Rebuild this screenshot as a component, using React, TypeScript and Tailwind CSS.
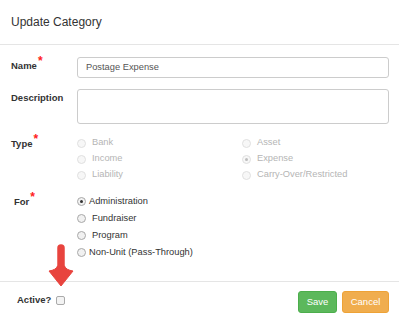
import React from 'react'

const typeLeft = [
  { label: 'Bank', checked: false },
  { label: 'Income', checked: false },
  { label: 'Liability', checked: false },
]

const typeRight = [
  { label: 'Asset', checked: false },
  { label: 'Expense', checked: true },
  { label: 'Carry-Over/Restricted', checked: false },
]

const forOptions = [
  { label: 'Administration', checked: true, gap: 'ml-[3px]' },
  { label: 'Fundraiser', checked: false, gap: 'ml-[6px]' },
  { label: 'Program', checked: false, gap: 'ml-[6px]' },
  { label: 'Non-Unit (Pass-Through)', checked: false, gap: 'ml-[3px]' },
]

function Radio({ checked, disabled }: { checked: boolean; disabled?: boolean }) {
  return (
    <span
      className={`flex items-center justify-center w-[9px] h-[9px] rounded-full border shrink-0 ${
        disabled ? 'border-[#e0e0e0] bg-[#f7f7f7]' : 'border-[#a8a8a8] bg-[#f1f1f1]'
      }`}
    >
      {checked && (
        <span
          className={`w-[3px] h-[3px] rounded-full ${disabled ? 'bg-[#bdbdbd]' : 'bg-[#333]'}`}
        />
      )}
    </span>
  )
}

function Star() {
  return <span className="text-[#ff2020] text-[12px] font-bold relative top-[-4px] ml-[1px]">*</span>
}

export default function App() {
  return (
    <div className="relative w-[399px] h-[324px] bg-white overflow-hidden font-['Liberation_Sans',Arial,sans-serif] text-[#333]">
      {/* header */}
      <div className="h-[45px] border-b border-[#e5e5e5] flex items-center pl-[11px] pb-[1px]">
        <h4 className="text-[12px] text-[#333]">Update Category</h4>
      </div>

      <div className="pt-[12px] pr-[10px]">
        {/* name */}
        <div className="flex">
          <label className="w-[77px] pl-[11px] text-[9.5px] font-bold leading-[16px]">
            Name
            <Star />
          </label>
          <div className="flex-1 h-[21px] border border-[#ccc] rounded-[3px] flex items-center pl-[8px] text-[9.3px] text-[#555]">
            Postage Expense
          </div>
        </div>

        {/* description */}
        <div className="flex mt-[11px]">
          <label className="w-[77px] pl-[11px] pt-[1px] text-[9.5px] font-bold leading-[16px]">Description</label>
          <div className="flex-1 h-[35px] border border-[#ccc] rounded-[3px]" />
        </div>

        {/* type */}
        <div className="flex mt-[11px]">
          <label className="w-[77px] pl-[11px] text-[9.5px] font-bold leading-[16px]">
            Type
            <Star />
          </label>
          <div className="flex text-[9.3px] text-[#b5b5b5]">
            <div className="w-[165px]">
              {typeLeft.map(o => (
                <div key={o.label} className="h-[16px] flex items-center">
                  <Radio checked={o.checked} disabled />
                  <span className="ml-[6px]">{o.label}</span>
                </div>
              ))}
            </div>
            <div>
              {typeRight.map(o => (
                <div key={o.label} className="h-[16px] flex items-center">
                  <Radio checked={o.checked} disabled />
                  <span className="ml-[6px]">{o.label}</span>
                </div>
              ))}
            </div>
          </div>
        </div>

        {/* for */}
        <div className="flex mt-[10px]">
          <label className="w-[77px] pl-[14px] text-[9.5px] font-bold leading-[17px]">
            For
            <Star />
          </label>
          <div className="text-[9.3px] text-[#333]">
            {forOptions.map(o => (
              <div key={o.label} className="h-[17px] flex items-center">
                <Radio checked={o.checked} />
                <span className={o.gap}>{o.label}</span>
              </div>
            ))}
          </div>
        </div>
      </div>

      {/* footer */}
      <div className="absolute left-0 right-0 top-[281px] h-[43px] border-t border-[#e5e5e5] flex items-center justify-between pl-[17px] pr-[10px]">
        <div className="flex items-center -mt-[6px]">
          <span className="text-[9.5px] font-bold">Active?</span>
          <span className="ml-[5px] w-[9px] h-[9px] border border-[#aaa] rounded-[2px] bg-[#f3f3f3]" />
        </div>
        <div className="flex gap-[5px] -mt-[2px]">
          <button className="w-[39px] h-[22px] rounded-[3px] bg-[#5cb85c] border border-[#4cae4c] text-white text-[9.5px]">
            Save
          </button>
          <button className="w-[47px] h-[22px] rounded-[3px] bg-[#f0ad4e] border border-[#eea236] text-white text-[9.5px]">
            Cancel
          </button>
        </div>
      </div>

      {/* red annotation arrow */}
      <svg className="absolute left-[44px] top-[240px]" width="32" height="50" viewBox="0 0 32 50">
        <path d="M17 8 L17 30" stroke="#e8443e" strokeWidth="7.5" strokeLinecap="round" />
        <path
          d="M17 46 L5 31 Q12 30 13.5 26 L20.5 26 Q22 30 29 31 Z"
          fill="#e8443e"
          stroke="#e8443e"
          strokeWidth="1"
          strokeLinejoin="round"
        />
      </svg>
    </div>
  )
}
